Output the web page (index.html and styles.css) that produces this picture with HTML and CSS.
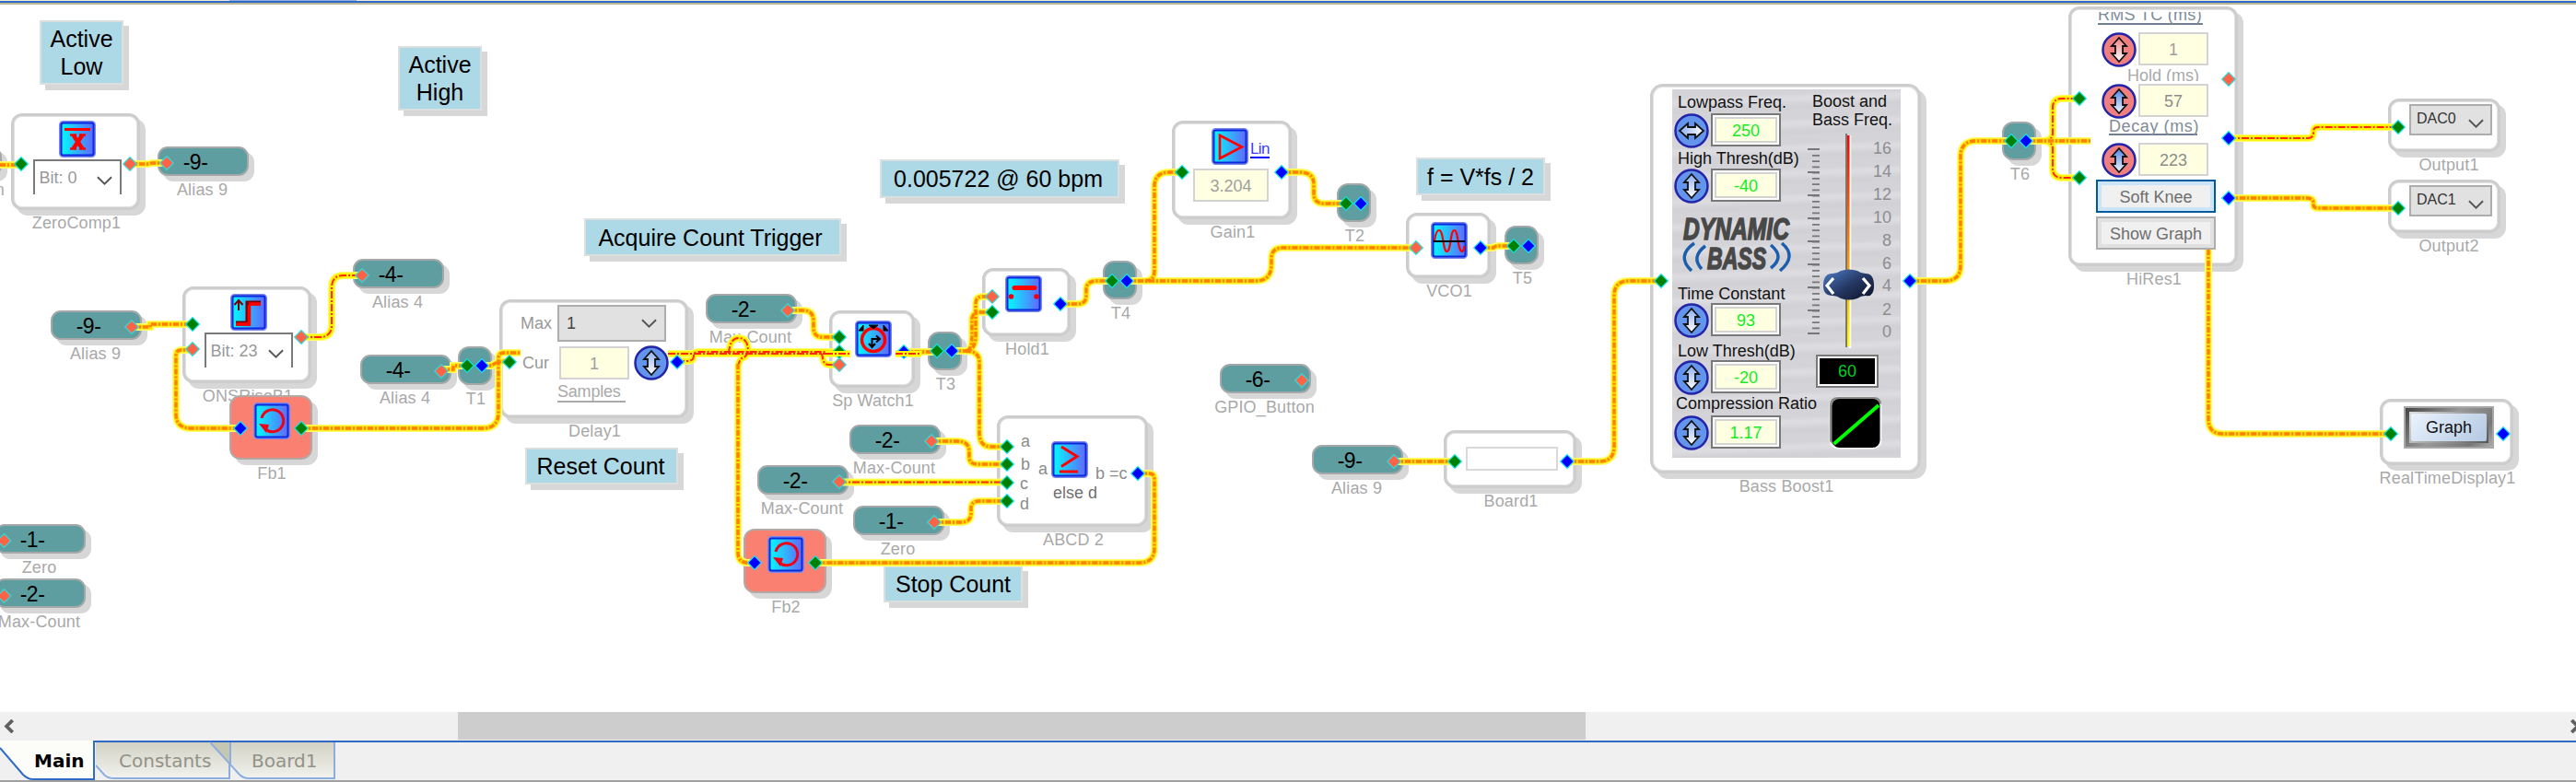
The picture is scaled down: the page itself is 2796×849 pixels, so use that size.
FILE: index.html
```
<!DOCTYPE html>
<html lang="en">
<head>
<meta charset="utf-8">
<title>Schematic</title>
<link rel="stylesheet" href="styles.css">
</head>
<body>
<svg class="defs" width="0" height="0" aria-hidden="true">
  <defs>
    <linearGradient id="face" x1="0" x2="1" y1="0" y2="0"><stop offset="0" stop-color="#00ffff"/><stop offset="1" stop-color="#6464ff"/></linearGradient>
    <linearGradient id="arrowBlue" x1="0" x2="0" y1="0" y2="1"><stop offset="0" stop-color="#8fb0f0"/><stop offset="1" stop-color="#fff"/></linearGradient>
    <linearGradient id="arrowDeep" x1="0" x2="0" y1="0" y2="1"><stop offset="0" stop-color="#4f86ea"/><stop offset="1" stop-color="#f4f8ff"/></linearGradient>
    <linearGradient id="arrowRed" x1="0" x2="0" y1="0" y2="1"><stop offset="0" stop-color="#f08080"/><stop offset="1" stop-color="#fff"/></linearGradient>
    <linearGradient id="track" x1="0" x2="0" y1="0" y2="1"><stop offset="0" stop-color="#f00"/><stop offset="1" stop-color="#ff0"/></linearGradient>
    <linearGradient id="thumb" x1="0" x2="1" y1="0" y2="1"><stop offset="0" stop-color="#4f7fca"/><stop offset=".5" stop-color="#263a66"/><stop offset="1" stop-color="#0c1024"/></linearGradient>
    <symbol id="frame" viewBox="0 0 40 40"><rect x="1.5" y="1.5" width="37" height="37" rx="3" fill="url(#face)" stroke="#7a86f0" stroke-width="3"/><rect x="2.5" y="2.5" width="35" height="35" rx="2" fill="none" stroke="#0a28dc" stroke-width="2"/></symbol>
    <symbol id="loop" viewBox="0 0 40 40"><path d="M9 17A12 12 0 1 1 13 29" fill="none" stroke="#f00014" stroke-width="3"/><path d="M6 23l11 1-3 9z" fill="#f00014"/></symbol>
    <symbol id="updown" viewBox="0 0 38 38"><path d="M19 6l8 9h-4v8h4l-8 9-8-9h4v-8h-4z" stroke="#111" stroke-width="1.8"/></symbol>
    <g id="dg"><path d="M0-8.2L8.2 0 0 8.2-8.2 0z" fill="#10e0e0"/><path d="M0-6.4L6.4 0 0 6.4-6.4 0z" fill="#008000"/></g>
    <g id="db"><path d="M0-8.2L8.2 0 0 8.2-8.2 0z" fill="#10e0f8"/><path d="M0-6.4L6.4 0 0 6.4-6.4 0z" fill="#00f"/></g>
    <g id="dr"><path d="M0-8.2L8.2 0 0 8.2-8.2 0z" fill="#30dada"/><path d="M0-6.4L6.4 0 0 6.4-6.4 0z" fill="#ff6347"/></g>
  </defs>
</svg>

<div class="app">
  <header class="topbar"><span class="topbar-tab"></span></header>
  <main class="canvas">
    <div class="note p-low">Active<br>Low</div>
    <div class="note p-high">Active<br>High</div>
    <div class="note p-acquire">Acquire Count Trigger</div>
    <div class="note p-reset">Reset Count</div>
    <div class="note p-stop">Stop Count</div>
    <div class="note p-bpm">0.005722 @ 60 bpm</div>
    <div class="note p-freq">f = V*fs / 2</div>

    <div class="alias p-edge"><span class="label">n</span></div>
    <div class="alias p-a9a">-9-<span class="label">Alias 9</span></div>
    <div class="alias p-a9b">-9-<span class="label">Alias 9</span></div>
    <div class="alias p-a4a">-4-<span class="label">Alias 4</span></div>
    <div class="alias p-a4b">-4-<span class="label">Alias 4</span></div>
    <div class="alias p-z0">-1-<span class="label">Zero</span></div>
    <div class="alias p-m0">-2-<span class="label">Max-Count</span></div>
    <div class="alias p-m1">-2-<span class="label">Max-Count</span></div>
    <div class="alias p-m2">-2-<span class="label">Max-Count</span></div>
    <div class="alias p-m3">-2-<span class="label">Max-Count</span></div>
    <div class="alias p-z1">-1-<span class="label">Zero</span></div>
    <div class="alias p-gpio">-6-<span class="label">GPIO_Button</span></div>
    <div class="alias p-a9c">-9-<span class="label">Alias 9</span></div>

    <div class="tee p-t1"><span class="label">T1</span></div>
    <div class="tee p-t2"><span class="label">T2</span></div>
    <div class="tee p-t3"><span class="label">T3</span></div>
    <div class="tee p-t4"><span class="label">T4</span></div>
    <div class="tee p-t5"><span class="label">T5</span></div>
    <div class="tee p-t6"><span class="label">T6</span></div>

    <section class="node stack p-zero">
      <svg class="icon" viewBox="0 0 40 40"><use href="#frame"/><path d="M6 9.5h28" stroke="#f00" stroke-width="3"/><path d="M12 15.5h7M22 15.5h7M12 30.500h7M22 30.500h7" stroke="#f00" stroke-width="2.500"/><path d="M15.500 15.500l10 15M25.500 15.500l-10 15" stroke="#f00" stroke-width="4.500"/></svg>
      <div class="bits"><span>Bit: 0</span><svg class="chev" viewBox="0 0 18 12"><path d="M1 2l8 8 8-8"/></svg></div>
      <span class="label">ZeroComp1</span>
    </section>
    <section class="node stack p-ons">
      <svg class="icon" viewBox="0 0 40 40"><use href="#frame"/><path d="M6 32h13V10h14" fill="none" stroke="#700" stroke-width="5"/><path d="M6 33h14.500V12M20 11h13" fill="none" stroke="#f00" stroke-width="3.500"/><path d="M9 18V7M4.500 12L9 7l4.500 5" fill="none" stroke="#700" stroke-width="2"/></svg>
      <div class="bits"><span>Bit: 23</span><svg class="chev" viewBox="0 0 18 12"><path d="M1 2l8 8 8-8"/></svg></div>
      <span class="label">ONSRiseB1</span>
    </section>
    <section class="node feedback p-fb1">
      <svg class="icon" viewBox="0 0 40 40"><use href="#frame"/><use href="#loop"/></svg><span class="label">Fb1</span>
    </section>
    <section class="node feedback p-fb2">
      <svg class="icon" viewBox="0 0 40 40"><use href="#frame"/><use href="#loop"/></svg><span class="label">Fb2</span>
    </section>

    <section class="node p-delay">
      <div class="delay-row"><span class="cap">Max</span><div class="combo"><span>1</span><svg class="chev" viewBox="0 0 18 12"><path d="M1 2l8 8 8-8"/></svg></div></div>
      <div class="delay-row second"><span class="cap">Cur</span><div class="value">1</div><svg class="knob" viewBox="0 0 38 38"><circle cx="19" cy="19" r="17.500"/><use href="#updown" fill="url(#arrowBlue)"/></svg></div>
      <div class="unit">Samples</div>
      <span class="label">Delay1</span>
    </section>

    <section class="node p-watch">
      <svg class="icon" viewBox="0 0 40 40"><use href="#frame"/><circle cx="20" cy="21" r="12.500" fill="none" stroke="#f00" stroke-width="3.500"/><path d="M4 11l5-6v6zM15 5h10l-5 4zM36 11l-5-6v6z" stroke="#000"/><path d="M18.500 28v-8H26M23 16.500l4 3.500-4 3.500M15 25l3.500 4 3.500-4" fill="none" stroke="#000" stroke-width="2"/></svg>
      <span class="label">Sp Watch1</span>
    </section>
    <section class="node p-hold">
      <svg class="icon" viewBox="0 0 40 40"><use href="#frame"/><path d="M10 13.500h22" stroke="#f00" stroke-width="5" stroke-linecap="round"/><circle cx="6.500" cy="23" r="2.800" fill="#f00014"/><circle cx="34" cy="23" r="2.800" fill="#f00014"/></svg>
      <span class="label">Hold1</span>
    </section>
    <section class="node p-gain">
      <div class="gain-top"><svg class="icon" viewBox="0 0 40 40"><use href="#frame"/><path d="M9 8v25l24-12.500z" fill="none" stroke="#f00" stroke-width="2.600"/></svg><span class="lin">Lin</span></div>
      <div class="value gain-value">3.204</div>
      <span class="label">Gain1</span>
    </section>
    <section class="node p-vco">
      <svg class="icon" viewBox="0 0 40 40"><use href="#frame"/><path d="M4 21C5 13 7 9 9 9c5 0 4 23 8.500 23S21 9 25.500 9 29 32 34 32c1 0 2-3 2.500-6" fill="none" stroke="#f00" stroke-width="2.200"/><path d="M3 21h34" stroke="#000" stroke-width="2"/></svg>
      <span class="label">VCO1</span>
    </section>
    <section class="node p-abcd">
      <svg class="abcd-body" viewBox="1085 454 158 115">
        <g class="port-names"><text x="1108" y="485">a</text><text x="1108" y="510">b</text><text x="1107" y="531">c</text><text x="1107" y="553">d</text><text x="1127" y="515">a</text><text x="1189" y="520">b =c</text></g>
        <text class="else" x="1143" y="541">else d</text>
        <use href="#frame" x="1141" y="479" width="40" height="40"/>
        <path d="M1152 485l17 10.500-17 11M1150 512h20" fill="none" stroke="#f00" stroke-width="3"/>
      </svg>
      <span class="label">ABCD 2</span>
    </section>
    <section class="node p-board"><div class="board-box"></div><span class="label">Board1</span></section>

    <section class="node p-bass">
      <div class="panel">
        <div class="params">
          <div class="param g1"><span>Lowpass Freq.</span><div class="ctl"><svg class="knob" viewBox="0 0 38 38"><circle cx="19" cy="19" r="17.500"/><use href="#updown" fill="url(#arrowBlue)" transform="rotate(-90 19 19)"/></svg><b>250</b></div></div>
          <div class="param g2"><span>High Thresh(dB)</span><div class="ctl"><svg class="knob" viewBox="0 0 38 38"><circle cx="19" cy="19" r="17.500"/><use href="#updown" fill="url(#arrowBlue)"/></svg><b>-40</b></div></div>
          <svg class="logo" viewBox="0 0 130 87">
            <g class="logo-text"><text x="7" y="38" textLength="115" lengthAdjust="spacingAndGlyphs">DYNAMIC</text><text x="33" y="70" textLength="64" lengthAdjust="spacingAndGlyphs">BASS</text></g>
            <path d="M19 42Q-1 56 16 72M31 45Q15 57 27 70M102 44Q118 57 102 69M114 42Q131 56 112 72" fill="none" stroke="#1c5eae" stroke-width="3.500"/>
          </svg>
          <div class="param g3"><span>Time Constant</span><div class="ctl"><svg class="knob" viewBox="0 0 38 38"><circle cx="19" cy="19" r="17.500"/><use href="#updown" fill="url(#arrowBlue)"/></svg><b>93</b></div></div>
          <div class="param g4"><span>Low Thresh(dB)</span><div class="ctl"><svg class="knob" viewBox="0 0 38 38"><circle cx="19" cy="19" r="17.500"/><use href="#updown" fill="url(#arrowBlue)"/></svg><b>-20</b></div></div>
          <div class="param g5"><span>Compression Ratio</span><div class="ctl"><svg class="knob" viewBox="0 0 38 38"><circle cx="19" cy="19" r="17.500"/><use href="#updown" fill="url(#arrowBlue)"/></svg><b>1.17</b></div></div>
        </div>
        <div class="boost">
          <div class="boost-title">Boost and<br>Bass Freq.</div>
          <svg class="slider" viewBox="1960 140 100 243">
            <path d="M1962 162h13M1962 187h13M1962 212h13M1962 237h13M1962 262h13M1962 287h13M1962 312h13M1962 337h13M1962 362h13" stroke="#777" stroke-width="2"/>
            <path d="M1971 168v190" stroke="#777" stroke-width="8" stroke-dasharray="1.800 4.450"/>
            <path d="M2004 145v232" stroke="#777" stroke-width="2"/><path d="M2008 147v231" stroke="#fff" stroke-width="2.500"/><rect x="2005" y="147" width="2.500" height="229" fill="url(#track)"/>
            <g class="scale"><text x="2053" y="167">16</text><text x="2053" y="192">14</text><text x="2053" y="217">12</text><text x="2053" y="242">10</text><text x="2053" y="267">8</text><text x="2053" y="292">6</text><text x="2053" y="316">4</text><text x="2053" y="342">2</text><text x="2053" y="366">0</text></g>
            <path d="M1979 310q0-13 10-13 5 0 9-3 9-3 18 0 4 3 9 3 9 0 9 13t-9 11q-5 0-9 3-9 3-18 0-4-3-9-3-10 0-10-11z" fill="url(#thumb)"/>
            <path d="M1990 302l-7 8 7 9M2022 302l7 8-7 9" fill="none" stroke="#fff" stroke-width="3.200"/>
          </svg>
          <div class="readout">60</div>
          <svg class="curve" viewBox="0 0 60 60"><rect x="1.500" y="1.500" width="57" height="57" rx="9" fill="#f4f4f4"/><path d="M2 50V11q0-9 9-9h39q8 0 8 8L46 6H12q-6 0-6 6v42z" fill="#8a8a8a"/><rect x="4.500" y="4" width="52" height="53" rx="8"/><path d="M6.500 53L55 11" stroke="#0f0" stroke-width="4"/></svg>
        </div>
      </div>
      <span class="label">Bass Boost1</span>
    </section>

    <section class="node p-hires">
      <div class="hi-head"><span>RMS TC (ms)</span></div>
      <div class="hi-row"><svg class="knob red" viewBox="0 0 38 38"><circle cx="19" cy="19" r="17.500"/><use href="#updown" fill="url(#arrowRed)"/></svg><div class="value">1</div></div>
      <div class="hi-hold">Hold (ms)</div>
      <div class="hi-row"><svg class="knob red" viewBox="0 0 38 38"><circle cx="19" cy="19" r="17.500"/><use href="#updown" fill="url(#arrowDeep)"/></svg><div class="value dark">57</div></div>
      <div class="hi-decay"><span>Decay (ms)</span></div>
      <div class="hi-row"><svg class="knob red" viewBox="0 0 38 38"><circle cx="19" cy="19" r="17.500"/><use href="#updown" fill="url(#arrowDeep)"/></svg><div class="value dark">223</div></div>
      <div class="btn soft">Soft Knee</div>
      <div class="btn">Show Graph</div>
      <span class="label">HiRes1</span>
    </section>

    <section class="node out p-out1"><div class="combo dac"><span>DAC0</span><svg class="chev" viewBox="0 0 18 12"><path d="M1 2l8 8 8-8"/></svg></div><span class="label">Output1</span></section>
    <section class="node out p-out2"><div class="combo dac"><span>DAC1</span><svg class="chev" viewBox="0 0 18 12"><path d="M1 2l8 8 8-8"/></svg></div><span class="label">Output2</span></section>
    <section class="node p-rtd"><div class="graph-btn"><div class="graph-rim"><div class="graph-face">Graph</div></div></div><span class="label">RealTimeDisplay1</span></section>

    <svg class="wires" viewBox="0 0 2796 773">
      <defs>
        <g id="thick">
          <path d="M0 179H23"/>
          <path d="M181 177H166L160 178H141"/>
          <path d="M143 355H163V352H209"/>
          <path d="M478 401H492V397H507"/>
          <path d="M523 397H534Q538 392 553 392"/>
          <path d="M209 380H197Q191 380 191 386V449Q191 465 207 465H261"/>
          <path d="M327 465H524Q541 465 541 448V389Q541 383 547 383H565"/>
          <path d="M801 395V600Q801 611 812 611H819"/>
          <path d="M855 337H872Q883 337 883 349V356Q883 366 893 366H911"/>
          <path d="M981 382H1017"/>
          <path d="M1033 381H1052Q1059 376 1059 366V330Q1059 322 1066 322H1077"/>
          <path d="M1050 381Q1055 378 1055 366V346Q1056 339 1063 339H1077"/>
          <path d="M1048 381Q1063 381 1063 393V470Q1063 485 1076 485H1093"/>
          <path d="M1011 479H1039Q1052 479 1052 490V496Q1052 504 1061 504H1093"/>
          <path d="M1014 567H1043Q1054 567 1054 557V552Q1054 544 1063 544H1093"/>
          <path d="M1235 514H1247Q1253 514 1253 520V595Q1253 611 1237 611H885"/>
          <path d="M1151 330H1170Q1179 330 1179 321V315Q1179 305 1190 305H1207"/>
          <path d="M1223 305H1363Q1380 305 1380 287V281Q1380 269 1392 269H1537"/>
          <path d="M1243 305Q1253 305 1253 294V203Q1253 187 1269 187H1283"/>
          <path d="M1391 187H1411Q1426 187 1426 200V210Q1426 221 1437 221H1461"/>
          <path d="M1607 269H1621Q1623 267 1626 267H1643"/>
          <path d="M1513 501H1579"/>
          <path d="M1701 501H1736Q1752 501 1752 485V321Q1752 305 1768 305H1803"/>
          <path d="M2073 305H2111Q2128 305 2128 288V170Q2128 153 2145 153H2183"/>
          <path d="M2199 153H2269"/>
          <path d="M2397 271V455Q2397 471 2413 471H2595"/>
          <path d="M2419 215H2503Q2511 215 2511 220V222Q2511 226 2516 226H2603"/>
        </g>
        <g id="thin">
          <path d="M327 366H347Q360 366 360 353V312Q360 299 373 299H393"/>
          <path d="M725 384H923M972 384H1000"/>
          <path d="M735 392H746Q753 392 753 386Q753 382 758 382H911"/>
          <path d="M791 384Q792 367 802 367Q812 367 812 382Q810 388 805 389Q801 393 801 400"/>
          <path d="M890 383Q893 385 893 389Q894 396 900 396H911"/>
          <path d="M911 523.500H1093"/>
          <path d="M2216 153Q2228 153 2228 145V117Q2228 107 2238 107H2257"/>
          <path d="M2216 153Q2228 153 2228 161V183Q2228 193 2238 193H2257"/>
          <path d="M2419 150H2505Q2511 150 2511 144V143Q2511 138 2516 138H2603"/>
        </g>
      </defs>
      <use class="w-glow" href="#thick"/><use class="w-glow" href="#thin"/>
      <use class="w-body" href="#thin"/><use class="w-red" href="#thin"/>
      <use class="w-gold" href="#thick"/><use class="w-dash" href="#thick"/>
      <g>
        <use href="#dg" x="23" y="178"/><use href="#dr" x="141" y="178"/><use href="#dr" x="181" y="177"/><use href="#dr" x="143" y="355"/>
        <use href="#dg" x="209" y="352"/><use href="#dr" x="209" y="379"/><use href="#dr" x="327" y="366"/><use href="#dr" x="393" y="299"/>
        <use href="#dr" x="479" y="403"/><use href="#db" x="261" y="465"/><use href="#dg" x="327" y="465"/>
        <use href="#dg" x="507" y="397"/><use href="#db" x="523" y="397"/><use href="#dg" x="553" y="393"/><use href="#db" x="735" y="393"/>
        <use href="#dr" x="855" y="337"/><use href="#dg" x="911" y="366"/><use href="#dg" x="911" y="382"/><use href="#dr" x="911" y="396"/><use href="#db" x="981" y="382"/>
        <use href="#dg" x="1017" y="381"/><use href="#db" x="1033" y="381"/><use href="#db" x="819" y="611"/><use href="#dg" x="885" y="611"/>
        <use href="#dr" x="1077" y="322"/><use href="#dg" x="1077" y="339"/><use href="#db" x="1151" y="330"/><use href="#dg" x="1207" y="305"/><use href="#db" x="1223" y="305"/>
        <use href="#dg" x="1283" y="187"/><use href="#db" x="1391" y="187"/><use href="#dg" x="1461" y="221"/><use href="#db" x="1477" y="221"/>
        <use href="#dr" x="1537" y="269"/><use href="#db" x="1607" y="269"/><use href="#dg" x="1643" y="267"/><use href="#db" x="1659" y="267"/>
        <use href="#dr" x="1011" y="479"/><use href="#dr" x="911" y="523"/><use href="#dr" x="1014" y="567"/>
        <use href="#dg" x="1093" y="485"/><use href="#dg" x="1093" y="504"/><use href="#dg" x="1093" y="524"/><use href="#dg" x="1093" y="544"/><use href="#db" x="1235" y="514"/>
        <use href="#dr" x="1413" y="413"/><use href="#dr" x="1513" y="501"/><use href="#dg" x="1579" y="501"/><use href="#db" x="1701" y="501"/>
        <use href="#dg" x="1803" y="305"/><use href="#db" x="2073" y="305"/><use href="#dg" x="2183" y="153"/><use href="#db" x="2199" y="153"/>
        <use href="#dg" x="2257" y="107"/><use href="#dg" x="2257" y="193"/><use href="#dr" x="2419" y="86"/><use href="#db" x="2419" y="150"/><use href="#db" x="2419" y="215"/>
        <use href="#dg" x="2603" y="138"/><use href="#dg" x="2603" y="226"/><use href="#dg" x="2595" y="471"/><use href="#db" x="2717" y="471"/>
        <use href="#dr" x="4.500" y="587"/><use href="#dr" x="4.500" y="647"/>
      </g>
      <path d="M896 384H923M972 384H1000" stroke="#ff0" stroke-width="6"/>
      <path class="over-dash" d="M896 384H923M972 384H1000"/>
    </svg>
  </main>

  <div class="scrollbar">
    <svg class="arrow" viewBox="0 0 14 16"><path d="M12 1L5 8l7 7" fill="none" stroke="#606060" stroke-width="4"/></svg>
    <div class="thumb"></div>
    <svg class="arrow right" viewBox="0 0 14 16"><path d="M2 1l7 7-7 7" fill="none" stroke="#606060" stroke-width="4"/></svg>
  </div>
  <nav class="tabs">
    <div class="tab active"><svg viewBox="0 0 104 44"><path d="M0 0H103V42H36Q30 42 25 37L0 9z" fill="#fcfcf8"/><path d="M0 8L25 37Q30 42 36 42H102V0" fill="none" stroke="#316ac5" stroke-width="2"/></svg><span>Main</span></div>
    <div class="tab mid"><svg viewBox="0 0 147 44"><path d="M0 2H147V41H20L0 26z" fill="url(#tabFill)"/><path d="M0 27L10 38Q14 41 20 41H145V2" fill="none" stroke="#8caede" stroke-width="2"/></svg><span>Constants</span></div>
    <div class="tab last"><svg viewBox="0 0 137 44"><defs><linearGradient id="tabFill" x1="0" x2="0" y1="0" y2="1"><stop offset="0" stop-color="#d2d2c4"/><stop offset="1" stop-color="#f2f2ef"/></linearGradient></defs><path d="M0 2H136V41H42Q36 41 32 37z" fill="url(#tabFill)"/><path d="M1 2h21v24z" fill="#c6c6b4"/><path d="M22 2v24" stroke="#8caede" stroke-width="2"/><path d="M0 2L32 37Q36 41 42 41H135V2" fill="none" stroke="#8caede" stroke-width="2"/></svg><span>Board1</span></div>
  </nav>
</div>
</body>
</html>
```
FILE: styles.css
```
* { box-sizing: border-box; }
body { margin: 0; background: #fff; overflow: hidden; font: 18px/20px "Liberation Sans", Arial, sans-serif; }
.defs { position: absolute; }
svg { display: block; }
.app { position: relative; display: flex; flex-direction: column; width: 2796px; height: 849px; overflow: hidden; }
.topbar { height: 5px; flex: none; background: #eceadf; border-bottom: 2px solid #bab798; box-shadow: inset 0 -2px #316ac5; padding-left: 249px; }
.topbar-tab { display: block; width: 138px; height: 1px; background: #8caee0; }
.canvas { position: absolute; inset: 0 0 76px 0; overflow: hidden; z-index: 0; }
.topbar { position: relative; z-index: 1; }
.wires { position: absolute; left: 0; top: 0; width: 2796px; height: 773px; }

/* notes */
.note { position: absolute; background: #add8e6; border: 2px solid #dcdfe0; box-shadow: 6px 6px 0 #d7d7d7; font-size: 25px; line-height: 30px; display: flex; align-items: center; justify-content: center; text-align: center; color: #000; white-space: nowrap; }
.p-low { left: 43px; top: 22px; width: 91px; height: 70px; }
.p-high { left: 432px; top: 50px; width: 91px; height: 70px; }
.p-acquire { left: 634px; top: 237px; width: 279px; height: 41px; padding-right: 5px; }
.p-reset { left: 570px; top: 486px; width: 166px; height: 40px; padding-right: 2px; }
.p-stop { left: 959px; top: 614px; width: 151px; height: 40px; }
.p-bpm { left: 955px; top: 173px; width: 260px; height: 42px; padding-right: 3px; }
.p-freq { left: 1537px; top: 171px; width: 140px; height: 41px; }

/* shared node looks */
.label { position: absolute; left: calc(50% + 1px); top: calc(100% + 7px); transform: translateX(-50%); white-space: nowrap; font-size: 18px; line-height: 20px; letter-spacing: .15px; color: #a9a9a9; }
.node { position: absolute; background: #fff; border: 3px solid #cdcdcd; border-radius: 12px; box-shadow: inset 0 0 0 1px #e2e2e2, 6px 6px 0 #d7d7d7; }
.alias, .tee { position: absolute; background: #5f9ea0; border: 2px solid #a4a8a8; box-shadow: 6px 6px 0 #d7d7d7; }
.alias { width: 99px; height: 32px; border-radius: 11px; font-size: 23px; line-height: 31px; letter-spacing: -.5px; text-align: center; padding-right: 17px; color: #000; }
.alias .label { left: calc(50% - 1px); top: calc(100% + 7px); }
.tee { width: 37px; height: 42px; border-radius: 12px; }
.tee .label { top: calc(100% + 7px); }
.icon { width: 40px; height: 40px; flex: none; }
.chev { width: 17px; height: 12px; fill: none; stroke: #555; stroke-width: 2; }
.knob { width: 38px; height: 38px; flex: none; fill: none; }
.knob circle { fill: #6495ed; stroke: #2424a8; stroke-width: 2.5; }
.knob.red circle { fill: #f08080; }
.value { width: 76px; height: 36px; background: #ffffe1; border: 2px solid #d3d3d3; color: #a0a0a0; text-align: center; line-height: 34px; }
.value.dark { color: #8c8c8c; }
.combo { display: flex; align-items: center; justify-content: space-between; background: #e1e1e1; border: 2px solid #adadad; }
.bits { width: 96px; height: 38px; margin-top: 2px; border: 2px solid #7a7a7a; border-bottom: 0; color: #999; display: flex; justify-content: space-between; align-items: center; padding: 0 8px 0 5px; }
.bits .chev { margin-top: 5px; }

/* aliases */
.p-edge { left: -97px; top: 159px; }
.p-edge .label { left: auto; right: -5px; transform: none; }
.p-a9a { left: 171px; top: 159px; }
.p-a9b { left: 55px; top: 337px; }
.p-a4a { left: 383px; top: 281px; }
.p-a4b { left: 391px; top: 385px; }
.p-z0 { left: -6px; top: 569px; }
.p-m0 { left: -6px; top: 628px; }
.p-m1 { left: 766px; top: 319px; }
.p-m2 { left: 922px; top: 461px; }
.p-m3 { left: 822px; top: 505px; }
.p-z1 { left: 926px; top: 549px; }
.p-gpio { left: 1324px; top: 395px; }
.p-a9c { left: 1424px; top: 483px; }
.p-t1 { left: 497px; top: 376px; }
.p-t2 { left: 1451px; top: 199px; }
.p-t3 { left: 1007px; top: 360px; }
.p-t4 { left: 1197px; top: 283px; }
.p-t5 { left: 1633px; top: 245px; }
.p-t6 { left: 2173px; top: 132px; }

/* blocks */
.stack { display: flex; flex-direction: column; align-items: center; padding: 5px 0 0 3px; width: 140px; height: 105px; }
.p-zero { left: 12px; top: 123px; }
.p-ons { left: 198px; top: 311px; }
.feedback { width: 90px; height: 70px; background: #fa8072; border-color: #b2a8a6; border-width: 2px; box-shadow: 6px 6px 0 #d7d7d7; padding: 6px 0 0 24px; }
.p-fb1 { left: 249px; top: 429px; }
.p-fb2 { left: 807px; top: 574px; }
.p-delay { left: 542px; top: 325px; width: 205px; height: 129px; padding: 3px 0 0 20px; color: #999; }
.delay-row { display: flex; align-items: center; height: 40px; }
.delay-row .cap { width: 40px; }
.delay-row .combo { width: 118px; height: 40px; padding: 0 8px; color: #444; }
.delay-row.second { height: 38px; margin-top: 4px; }
.second .cap { width: 39px; padding: 0 0 0 2px; flex: none; }
.second .value { margin: 0 5px 0 3px; }
.unit { width: 74px; margin: 2px 0 0 40px; border-bottom: 2px solid #a9a9a9; color: #a9a9a9; letter-spacing: -.2px; height: 22px; line-height: 21px; }
.p-watch { left: 900px; top: 337px; width: 93px; height: 84px; padding: 8px 0 0 25px; }
.p-hold { left: 1066px; top: 291px; width: 96px; height: 74px; padding: 5px 0 0 22px; }
.p-gain { left: 1272px; top: 131px; width: 130px; height: 107px; padding: 5px 0 0 20px; }
.gain-top { display: flex; align-items: center; padding-left: 20px; }
.lin { color: #3c3cff; font-size: 17px; line-height: 17px; height: 19px; border-bottom: 2px solid #00f; margin: 6px 0 0 2px; letter-spacing: -.6px; }
.gain-value { width: 82px; margin-top: 4px; }
.p-vco { left: 1526px; top: 231px; width: 92px; height: 71px; padding: 7px 0 0 24px; }
.p-abcd { left: 1082px; top: 451px; width: 164px; height: 121px; }
.abcd-body { width: 158px; height: 115px; }
.port-names { fill: #8c8c8c; font-size: 18px; }
.else { fill: #707070; font-size: 18px; }
.p-board { left: 1567px; top: 467px; width: 144px; height: 63px; padding: 15px 0 0 21px; }
.board-box { width: 100px; height: 26px; border: 2px solid #d9d9d9; }

/* bass boost */
.p-bass { left: 1791px; top: 91px; width: 294px; height: 423px; padding: 3px 0 0 21px; border-radius: 14px; }
.panel { width: 248px; height: 400px; display: flex; color: #111; background: repeating-linear-gradient(178deg, #d4d4d8 0 9px, #dcdce0 13px 16px, #d2d2d6 22px 27px); }
.params { width: 145px; flex: none; padding: 4px 0 0 2px; }
.param { white-space: nowrap; }
.param > span { display: block; padding-left: 4px; height: 21px; }
.ctl { display: flex; gap: 2px; height: 38px; }
.ctl b, .readout { font-weight: normal; display: block; height: 36px; border: 2px solid #787878; text-align: center; }
.ctl b { width: 76px; background: #ffffe1; box-shadow: inset 0 0 0 2px #fff, inset 0 0 0 4px #d3d3d3; color: #10ee20; line-height: 34px; }
.g1, .g4 { height: 61px; }
.g1 > span { height: 22px; }
.g2 { height: 60px; }
.g3 { height: 62px; }
.g3 > span, .g4 > span { height: 20px; }
.g4 { height: 57px; }
.g5 > span { height: 23px; padding-left: 2px; }
.logo { width: 130px; height: 87px; margin-left: 3px; }
.logo-text { font: italic bold 34px "Liberation Sans", Arial, sans-serif; fill: #484848; stroke: #484848; stroke-width: 1.6; }
.boost { width: 100px; padding-top: 3px; }
.boost-title { padding-left: 7px; white-space: nowrap; height: 40px; }
.slider { width: 100px; height: 243px; }
.scale { fill: #8d8d90; font-size: 18px; text-anchor: end; }
.readout { width: 68px; margin: 2px 0 0 11px; background: #000; box-shadow: inset 0 0 0 2px #fff; color: #00d020; line-height: 33px; }
.curve { width: 60px; height: 60px; margin: 8px 0 0 24px; }

/* dynamics block */
.p-hires { left: 2245px; top: 7px; width: 184px; height: 282px; padding: 3px 0 0 27px; }
.hi-head { height: 14px; margin-left: 2px; overflow: hidden; display: flex; align-items: flex-end; color: #808c98; }
.hi-head span { width: 114px; height: 20px; line-height: 19px; border-bottom: 2px solid #708090; white-space: nowrap; letter-spacing: .3px; flex: none; }
.hi-row { display: flex; gap: 2px; margin-left: 6px; height: 38px; margin-top: 8px; }
.hi-row + .hi-hold { margin: -1px 0 0 34px; height: 16px; line-height: 20px; overflow: hidden; color: #a9a9a9; }
.hi-hold + .hi-row { margin-top: 3px; }
.hi-decay { height: 18px; margin: 0 0 0 14px; color: #808c98; }
.hi-decay span { display: block; width: 96px; height: 18px; border-bottom: 2px solid #708090; line-height: 17px; white-space: nowrap; letter-spacing: .6px; }
.hi-decay + .hi-row { margin: 8px 0 2px 6px; }
.btn { width: 130px; height: 36px; border: 2px solid #adadad; background: #f0f0f0; box-shadow: inset 0 0 0 4px #e1e1e1; color: #6e6e6e; text-align: center; line-height: 34px; margin-bottom: 4px; white-space: nowrap; }
.btn.soft { border-color: #005a9e; box-shadow: inset 0 0 0 4px #cce4f7; }

/* outputs */
.out { width: 122px; height: 58px; padding: 3px 0 0 20px; }
.p-out1 { left: 2592px; top: 107px; }
.p-out2 { left: 2592px; top: 195px; }
.combo.dac { width: 90px; height: 34px; padding: 0 7px 0 6px; font-size: 16px; color: #333; }
.dac span { padding-bottom: 2px; }
.dac .chev { margin-top: 8px; }
.out .label { left: calc(50% + 5px); }
.p-rtd { left: 2583px; top: 433px; width: 145px; height: 72px; padding: 5px 0 0 23px; }
.graph-btn { width: 98px; height: 46px; padding: 4px; background: linear-gradient(135deg, #444 0, #999 45%, #777 80%, #aaa); border: 2px solid #a8a8a8; }
.graph-rim { height: 100%; padding: 2px; background: linear-gradient(135deg, #ddd, #888 70%, #555); }
.graph-face { height: 100%; background: linear-gradient(135deg, #eaf3fd, #b4c8e2); border-radius: 2px; text-align: center; line-height: 31px; color: #111; }

/* wires */
.w-glow, .w-body, .w-red, .w-gold, .w-dash { fill: none; }
.w-glow { stroke: #ffff68; stroke-width: 8; }
.w-body { stroke: #fff000; stroke-width: 5.500; }
.w-red, .over-dash { fill: none; stroke: #ff2810; stroke-width: 2; stroke-dasharray: 8 2 2 2; }
.w-gold { stroke: #ffdc00; stroke-width: 5; }
.w-dash { stroke: #ff8000; stroke-width: 3.300; stroke-dasharray: 6 2 2 2; }

/* bottom */
.scrollbar { margin-top: auto; flex: none; height: 31px; background: #f0f0f0; display: flex; align-items: center; position: relative; z-index: 1; }
.arrow { width: 14px; height: 15px; margin-left: 2px; flex: none; }
.scrollbar .thumb { margin: 0 1066px 0 481px; width: 1224px; height: 30px; align-self: flex-start; background: #cdcdcd; flex: none; }
.tabs { position: relative; z-index: 1; flex: none; height: 45px; background: #f0f0f0; display: flex; border-bottom: 2px solid #a0a0a0; font: 20px/24px "DejaVu Sans", Verdana, sans-serif; color: #929288; border-top: 2px solid #316ac5; }
.tab { position: relative; flex: none; height: 43px; margin-top: -2px; }
.tab svg { width: 100%; height: 44px; }
.tab span { position: absolute; top: 10px; }
.tab.active { width: 104px; color: #000; font-weight: bold; z-index: 2; }
.tab.active span { left: 37px; }
.tab.mid { width: 147px; }
.tab.mid span { left: 25px; }
.tab.last { width: 137px; margin-left: -23px; }
.tab.last span { left: 45px; }
```
